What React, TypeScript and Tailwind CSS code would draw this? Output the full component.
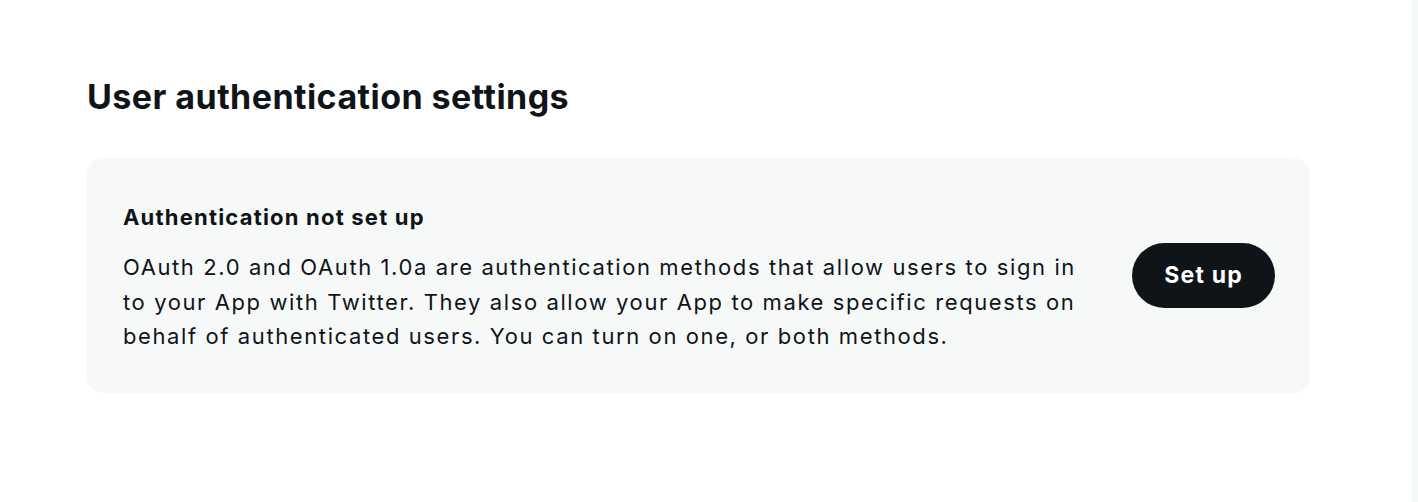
export default function App() {
  return (
    <div className="flex min-h-[502px] w-full bg-white font-['Inter',sans-serif] text-[#0f1419]">
      <main className="flex-1 pl-[87px] pt-[77px]">
        <h1 className="text-[34px] font-bold leading-[40px] tracking-[0.45px]">User authentication settings</h1>
        <section className="mt-[41px] flex w-[1223px] items-center gap-[38px] rounded-[16px] bg-[#f7f9f9] pl-[36px] pr-[35px] py-[39px]">
          <div className="flex-1 pt-[6px]">
            <h2 className="text-[22px] font-bold leading-7 tracking-[1.2px]">Authentication not set up</h2>
            <p className="mt-[19px] text-[22px] leading-[34.5px] tracking-[1.6px]">
              OAuth 2.0 and OAuth 1.0a are authentication methods that allow users to sign in to your App with Twitter. They also allow your App to make specific requests on behalf of authenticated users. You can turn on one, or both methods.
            </p>
          </div>
          <button className="h-[65px] shrink-0 rounded-full bg-[#0f1419] px-[32px] text-[23px] font-bold tracking-[1.2px] text-white">Set up</button>
        </section>
      </main>
      <div className="w-[6px] bg-[#f5f8f8]" />
    </div>
  );
}
